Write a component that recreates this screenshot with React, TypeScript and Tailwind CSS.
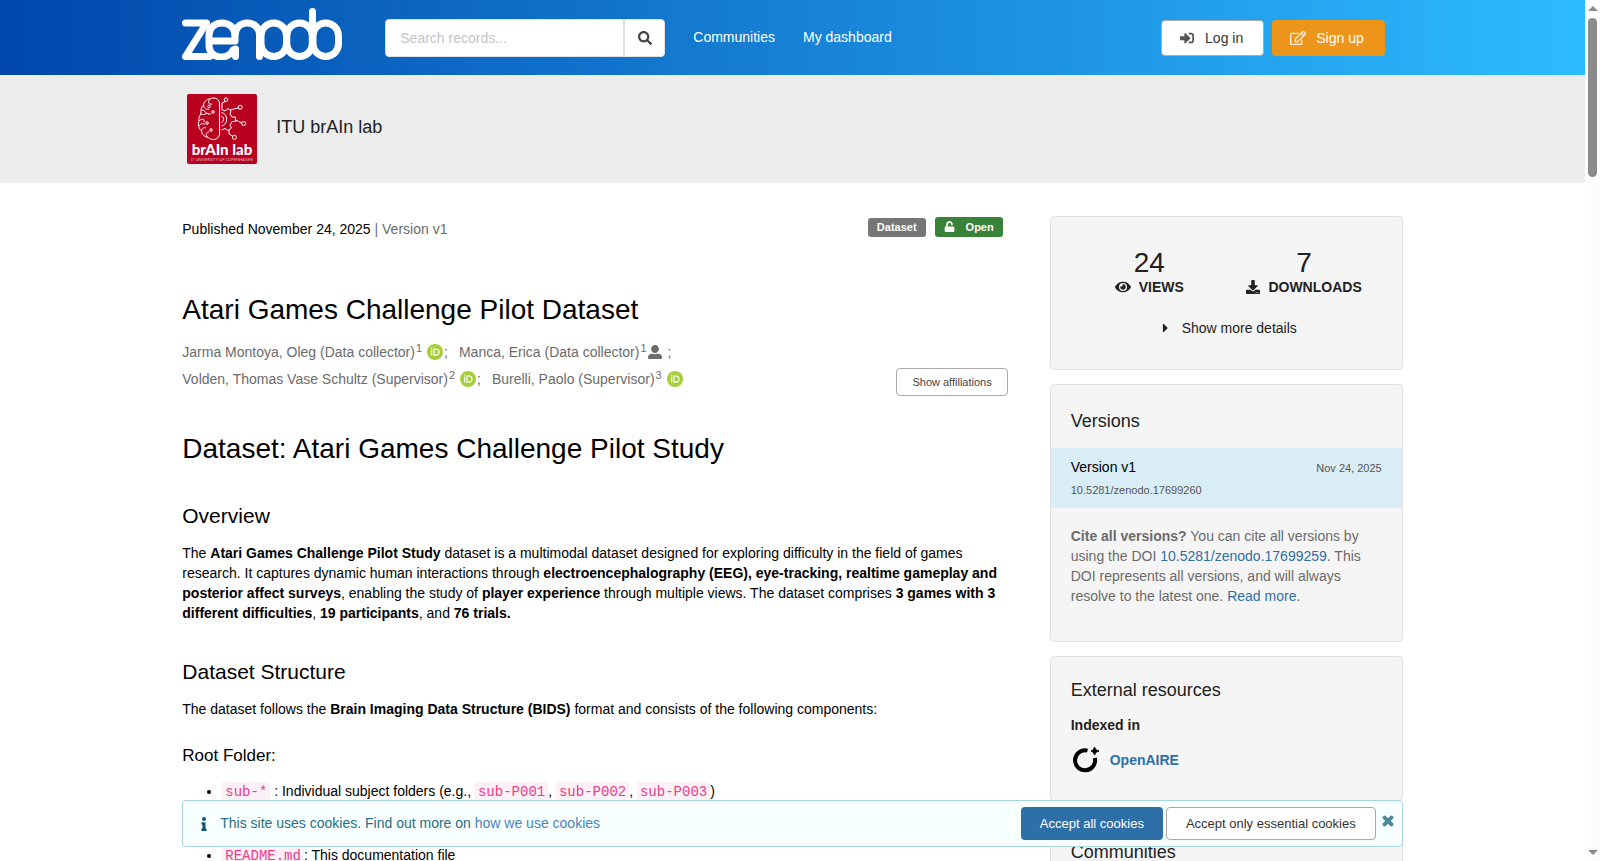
import { useState } from "react";
import {
  FaSearch,
  FaSignInAlt,
  FaRegEdit,
  FaUnlock,
  FaUserAlt,
  FaEye,
  FaDownload,
  FaCaretRight,
  FaInfo,
  FaTimes,
} from "react-icons/fa";

function ZenodoLogo() {
  return (
    <svg
      viewBox="0 0 160 52"
      className="h-[52px] w-[160px]"
      fill="none"
      stroke="#fff"
      strokeWidth="7"
      strokeLinecap="round"
      strokeLinejoin="round"
    >
      <path d="M3.500 15H24.500L3.500 48.500H27.500" />
      <path d="M29 33H53V27C53 11 27 11 27 27V37C27 52 47 52 51 42" />
      <path d="M53.500 41V48.500M53 27C53 11 77.500 11 77.500 27V48.500" />
      <rect x="79" y="15" width="25.500" height="33.500" rx="12.700" />
      <rect x="104.800" y="15" width="25.500" height="33.500" rx="12.700" />
      <path d="M130.500 3.500V26" />
      <rect x="131" y="15" width="25.500" height="33.500" rx="12.700" />
    </svg>
  );
}

function BrainLogo() {
  return (
    <svg viewBox="0 0 70 70" className="h-[70px] w-[70px] rounded-xs">
      <rect width="70" height="70" fill="#b9001f" />
      <g fill="none" stroke="#fff" strokeWidth="1">
        <path d="M32.500 9C32 4 26 3 23 5C19 5 17 8 16.500 11C14 13 13.500 17 14 20C12 22 11.500 25 12 27C10.500 31 12 35 14.500 37C15 41 18 43 21 43.500C25 47 32 46 32.500 40Z" />
        <path d="M23 5C20 8 22 11 25 10M16.500 11C17 15 20 16 22 15M14 20C18 22 19 18 22 20M15 16C18 16 19 21 24 20M12 27C15 24 18 25 17 28M12 32C14 29 17 29 18 31M14.500 37C15 34 17 33 19 34M21 43.500C18 41 19 38 22 38" />
        <circle cx="22" cy="12.500" r="1.300" />
        <circle cx="26" cy="18" r="1.300" />
        <circle cx="20" cy="29" r="1.300" />
        <circle cx="24" cy="36" r="1.300" />
        <path d="M34.500 18.500A7 7 0 0 1 34.500 32M34.500 22A3.500 3.500 0 0 1 34.500 28.500" />
        <path d="M34.500 15.500L38 17L41 14.500L44 17L43 20L45 23H48.500V27.500H45L43 31L44.500 34L41 36.500L38 34.500L34.500 36" />
        <path d="M35 15V9L38 7.500M43 16L47 15L51.500 14M48.500 26L55 29M42 36V40L46 42.500" />
        <circle cx="39" cy="5.700" r="1.800" />
        <circle cx="53.200" cy="13.300" r="2" />
        <circle cx="56.700" cy="29.500" r="2" />
        <circle cx="47.400" cy="43.300" r="2" />
      </g>
      <text x="35" y="61" textAnchor="middle" fill="#fff" fontSize="15" fontWeight="900" fontFamily="Lato, sans-serif">
        brAIn lab
      </text>
      <text x="35" y="67" textAnchor="middle" fill="#fff" fillOpacity="0.7" fontSize="4" fontFamily="Lato, sans-serif">
        IT UNIVERSITY OF COPENHAGEN
      </text>
    </svg>
  );
}

function OrcidIcon() {
  return (
    <svg viewBox="0 0 16 16" className="inline-block h-4 w-4 align-[-3px]">
      <circle cx="8" cy="8" r="8" fill="#a6ce39" />
      <path
        d="M4.7 5.6V11.6M7 5H9C13 5 13 11.2 9 11.2H7Z"
        fill="none"
        stroke="#fff"
        strokeWidth="1.2"
      />
      <circle cx="4.7" cy="4.1" r="0.7" fill="#fff" />
    </svg>
  );
}

function OpenAireLogo() {
  return (
    <svg viewBox="0 0 26 26" className="h-[26px] w-[26px]">
      <path d="M14.500 3.600A10 10 0 1 0 21.800 11" fill="none" stroke="#000" strokeWidth="4" />
      <path d="M21.500 0Q22 3.500 26 4Q22 4.500 21.500 8Q21 4.500 18 4Q21 3.500 21.500 0Z" stroke="#000" />
    </svg>
  );
}

function Creator(props: {
  name: string;
  affiliation: number;
  orcid: boolean;
  last?: boolean;
}) {
  const { name, affiliation, orcid, last } = props;

  return (
    <li className="mr-[11px] whitespace-nowrap">
      <a href="#">{name}</a>
      <sup className="mx-px text-[11px]">{affiliation}</sup>
      {orcid ? (
        <span className="mr-px ml-1">
          <OrcidIcon />
        </span>
      ) : (
        <FaUserAlt className="mr-[6px] inline-block h-[14px] w-[14px] align-[-2px]" />
      )}
      {!last && ";"}
    </li>
  );
}

function Code(props: { children: string }) {
  return (
    <code className="rounded-xs bg-[#fdf0f6] px-[3px] py-[2px] font-['Liberation_Mono',monospace] text-[14px] text-[#e83e8c]">
      {props.children}
    </code>
  );
}

function Panel(props: { children: React.ReactNode; className?: string }) {
  return (
    <section
      className={`rounded-sm border border-[#e0e1e2] bg-[#f5f5f5] ${props.className ?? ""}`}
    >
      {props.children}
    </section>
  );
}

function Header() {
  return (
    <header className="bg-linear-to-r/srgb from-[#0047ab] to-[#2dbbff]">
      <div className="mx-auto flex h-[75px] w-[77%] items-center text-white">
        <a href="#" aria-label="Zenodo" className="mt-[-7px]">
          <ZenodoLogo />
        </a>
        <form className="ml-[43px] flex h-[38px] w-[280px] overflow-hidden rounded-sm border border-[#e0e1e2] bg-white">
          <input
            type="text"
            aria-label="Search records"
            placeholder="Search records..."
            className="min-w-0 flex-1 px-[14px] text-[14px] text-black outline-none placeholder:text-[#c4c4c4]"
          />
          <button
            type="button"
            aria-label="Search"
            className="flex w-[41px] items-center justify-center border-l-2 border-[#e0e1e2] text-[#444]"
          >
            <FaSearch className="h-[14px] w-[14px]" />
          </button>
        </form>
        <nav className="ml-7 flex gap-7 pb-[2px]">
          <a href="#">Communities</a>
          <a href="#">My dashboard</a>
        </nav>
        <div className="mr-[18px] ml-auto flex gap-2">
          <button className="flex h-9 items-center gap-[11px] rounded-sm border border-[#aaa] bg-white pr-5 pl-[18px] text-[#333]">
            <FaSignInAlt className="h-[14px] w-[14px] text-[#555]" />
            Log in
          </button>
          <button className="flex h-9 items-center gap-[10px] rounded-sm bg-[#ed941a] pr-[21px] pl-[18px]">
            <FaRegEdit className="h-4 w-4 opacity-85" />
            Sign up
          </button>
        </div>
      </div>
    </header>
  );
}

function Record() {
  return (
    <main className="min-w-0 flex-1 text-black">
      <div className="flex h-[21px] items-center justify-between pr-[5px]">
        <p className="pt-[5px]">
          Published November 24, 2025 <span className="text-[#6b6b6b]">| Version v1</span>
        </p>
        <div className="flex items-end gap-[9px] text-[11px] font-bold text-white">
          <span className="flex h-[19px] items-center rounded-[3px] bg-[#767676] px-[9px]">
            Dataset
          </span>
          <span className="flex h-5 items-center gap-[11px] rounded-[3px] bg-[#388339] px-[9px]">
            <FaUnlock className="h-[11px] w-[11px]" />
            Open
          </span>
        </div>
      </div>

      <h1 className="mt-[55px] text-[28px] leading-9">Atari Games Challenge Pilot Dataset</h1>
      <div className="mt-[11px] flex items-end justify-between text-[#6b6b6b]">
        <ul className="flex w-[520px] flex-wrap pb-[3px] leading-[27px]">
          <Creator name="Jarma Montoya, Oleg (Data collector)" affiliation={1} orcid />
          <Creator name="Manca, Erica (Data collector)" affiliation={1} orcid={false} />
          <Creator name="Volden, Thomas Vase Schultz (Supervisor)" affiliation={2} orcid />
          <Creator name="Burelli, Paolo (Supervisor)" affiliation={3} orcid last />
        </ul>
        <button className="h-7 rounded-sm border border-[#aaa] bg-white px-[15px] text-[11px] text-[#444]">
          Show affiliations
        </button>
      </div>

      <h1 className="mt-[35px] text-[28px] leading-9">Dataset: Atari Games Challenge Pilot Study</h1>
      <h2 className="mt-[35px] text-[21px] leading-7">Overview</h2>
      <p className="mt-[13px]">
        The <b>Atari Games Challenge Pilot Study</b> dataset is a multimodal dataset designed for
        exploring difficulty in the field of games research. It captures dynamic human interactions
        through{" "}
        <b>
          electroencephalography (EEG), eye-tracking, realtime gameplay and posterior affect surveys
        </b>
        , enabling the study of <b>player experience</b> through multiple views. The dataset
        comprises <b>3 games with 3 different difficulties</b>, <b>19 participants</b>, and{" "}
        <b>76 trials.</b>
      </p>
      <h2 className="mt-[35px] text-[21px] leading-7">Dataset Structure</h2>
      <p className="mt-[13px]">
        The dataset follows the <b>Brain Imaging Data Structure (BIDS)</b> format and consists of
        the following components:
      </p>
      <h3 className="mt-[25px] text-[17px] leading-6">Root Folder:</h3>
      <ul className="mt-[13px] flex list-disc flex-col gap-[11px] pl-10">
        <li>
          <Code>sub-*</Code> : Individual subject folders (e.g., <Code>sub-P001</Code>,{" "}
          <Code>sub-P002</Code>, <Code>sub-P003</Code>)
        </li>
        <li>
          <Code>dataset_description.json</Code>: Dataset metadata
        </li>
        <li>
          <Code>README.md</Code>: This documentation file
        </li>
      </ul>
    </main>
  );
}

function Sidebar() {
  return (
    <aside className="flex w-[353px] shrink-0 flex-col gap-[14px] text-[#212121]">
      <Panel className="h-[154px] px-5 pt-8">
        <dl className="flex justify-between pr-5 pl-11">
          <div className="flex flex-col-reverse text-center">
            <dt className="flex items-center gap-2 font-bold">
              <FaEye className="h-4 w-4" />
              VIEWS
            </dt>
            <dd className="text-[28px] leading-7">24</dd>
          </div>
          <div className="flex flex-col-reverse text-center">
            <dt className="flex items-center gap-2 font-bold">
              <FaDownload className="h-[14px] w-[14px]" />
              DOWNLOADS
            </dt>
            <dd className="text-[28px] leading-7">7</dd>
          </div>
        </dl>
        <button className="mx-auto mt-[21px] flex items-center gap-3 pl-[5px]">
          <FaCaretRight className="h-[14px] w-[9px]" />
          Show more details
        </button>
      </Panel>

      <Panel className="h-[258px]">
        <h2 className="px-5 pt-6 text-[18px] leading-6">Versions</h2>
        <div className="mt-[15px] h-[60px] bg-[#d9edf7] px-5 pt-[9px]">
          <div className="flex items-baseline justify-between">
            <a href="#" className="text-black">
              Version v1
            </a>
            <time className="text-[11px] text-[#555]">Nov 24, 2025</time>
          </div>
          <a href="#" className="block pt-[2px] text-[11px] text-[#555]">
            10.5281/zenodo.17699260
          </a>
        </div>
        <p className="px-5 pt-[18px] text-[#6b6b6b]">
          <b>Cite all versions?</b> You can cite all versions by using the DOI{" "}
          <a href="#" className="text-[#2f6fa7]">
            10.5281/zenodo.17699259
          </a>
          . This DOI represents all versions, and will always resolve to the latest one.{" "}
          <a href="#" className="text-[#2f6fa7]">
            Read more
          </a>
          .
        </p>
      </Panel>

      <Panel className="h-[145px] px-5 pt-[21px]">
        <h2 className="text-[18px] leading-6">External resources</h2>
        <h3 className="mt-[13px] font-bold">Indexed in</h3>
        <a href="#" className="mt-3 flex items-center gap-[11px] pl-[2px] font-bold text-[#2f6fa7]">
          <OpenAireLogo />
          OpenAIRE
        </a>
      </Panel>

      <Panel className="h-40 px-5 pt-6">
        <h2 className="text-[18px] leading-6">Communities</h2>
      </Panel>
    </aside>
  );
}

function CookieBanner(props: { onClose: () => void }) {
  return (
    <div className="absolute inset-x-0 bottom-[14px]">
      <div className="mx-auto flex h-[47px] w-[77%] items-center rounded-sm border border-[#a9d5de] bg-[#f8ffff] text-[#276f86]">
        <FaInfo className="ml-[14px] h-[14px] w-[14px] text-[#0e566c]" />
        <p className="ml-[9px] pb-px">
          This site uses cookies. Find out more on{" "}
          <a href="#" className="text-[#4a85b8]">
            how we use cookies
          </a>
        </p>
        <div className="mr-[5px] ml-auto flex gap-[3px] text-[13px]">
          <button
            onClick={props.onClose}
            className="h-[33px] rounded-sm bg-[#2f6fa7] px-[19px] text-white"
          >
            Accept all cookies
          </button>
          <button
            onClick={props.onClose}
            className="h-[33px] rounded-sm border border-[#aaa] bg-white px-[19px] text-[#333]"
          >
            Accept only essential cookies
          </button>
        </div>
        <button onClick={props.onClose} aria-label="Close" className="mr-[7px] mb-[5px]">
          <FaTimes
            className="h-[14px] w-[14px] text-[#4d8a9c]"
            stroke="currentColor"
            strokeWidth="50"
          />
        </button>
      </div>
    </div>
  );
}

function Scrollbar() {
  return (
    <div className="flex w-[15px] shrink-0 flex-col items-center bg-[#fcfcfc] py-[6px]">
      <div className="h-0 w-0 border-x-[5px] border-b-[5px] border-x-transparent border-b-[#8b8b8b]" />
      <div className="mt-[7px] h-[159px] w-[9px] rounded-full bg-[#8b8b8b]" />
      <div className="mt-auto h-0 w-0 border-x-[5px] border-t-[5px] border-x-transparent border-t-[#8b8b8b]" />
    </div>
  );
}

function App() {
  const [showCookies, setShowCookies] = useState(true);

  return (
    <div className="flex h-screen overflow-hidden bg-white font-['Liberation_Sans',Arial,sans-serif] text-[14px] leading-5">
      <div className="relative min-w-0 flex-1 overflow-hidden">
        <Header />
        <div className="bg-[#ececec]">
          <div className="mx-auto flex h-[108px] w-[77%] items-center gap-[19px] pl-[5px]">
            <BrainLogo />
            <a href="#" className="pb-1 text-[18px] leading-6 text-[#212121]">
              ITU brAIn lab
            </a>
          </div>
        </div>
        <div className="mx-auto flex w-[77%] gap-[42px] pt-[33px]">
          <Record />
          <Sidebar />
        </div>
        {showCookies && <CookieBanner onClose={() => setShowCookies(false)} />}
      </div>
      <Scrollbar />
    </div>
  );
}

export default App;
